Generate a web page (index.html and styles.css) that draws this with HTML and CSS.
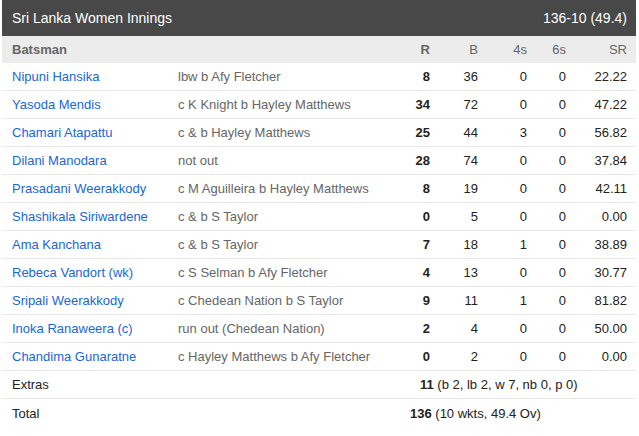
FILE: index.html
```html
<!DOCTYPE html>
<html>
<head>
<meta charset="utf-8">
<link rel="stylesheet" href="styles.css">
</head>
<body>
<div class="card">
  <div class="title">
    <span>Sri Lanka Women Innings</span>
    <span>136-10 (49.4)</span>
  </div>
  <div class="row head">
    <div class="c-name">Batsman</div>
    <div></div>
    <div class="num b">R</div>
    <div class="num">B</div>
    <div class="num">4s</div>
    <div class="num">6s</div>
    <div class="num">SR</div>
  </div>
  <div class="row"><a class="c-name">Nipuni Hansika</a><div class="out">lbw b Afy Fletcher</div><div class="num b">8</div><div class="num">36</div><div class="num">0</div><div class="num">0</div><div class="num">22.22</div></div>
  <div class="row"><a class="c-name">Yasoda Mendis</a><div class="out">c K Knight b Hayley Matthews</div><div class="num b">34</div><div class="num">72</div><div class="num">0</div><div class="num">0</div><div class="num">47.22</div></div>
  <div class="row"><a class="c-name">Chamari Atapattu</a><div class="out">c &amp; b Hayley Matthews</div><div class="num b">25</div><div class="num">44</div><div class="num">3</div><div class="num">0</div><div class="num">56.82</div></div>
  <div class="row"><a class="c-name">Dilani Manodara</a><div class="out">not out</div><div class="num b">28</div><div class="num">74</div><div class="num">0</div><div class="num">0</div><div class="num">37.84</div></div>
  <div class="row"><a class="c-name">Prasadani Weerakkody</a><div class="out">c M Aguilleira b Hayley Matthews</div><div class="num b">8</div><div class="num">19</div><div class="num">0</div><div class="num">0</div><div class="num">42.11</div></div>
  <div class="row"><a class="c-name">Shashikala Siriwardene</a><div class="out">c &amp; b S Taylor</div><div class="num b">0</div><div class="num">5</div><div class="num">0</div><div class="num">0</div><div class="num">0.00</div></div>
  <div class="row"><a class="c-name">Ama Kanchana</a><div class="out">c &amp; b S Taylor</div><div class="num b">7</div><div class="num">18</div><div class="num">1</div><div class="num">0</div><div class="num">38.89</div></div>
  <div class="row"><a class="c-name">Rebeca Vandort (wk)</a><div class="out">c S Selman b Afy Fletcher</div><div class="num b">4</div><div class="num">13</div><div class="num">0</div><div class="num">0</div><div class="num">30.77</div></div>
  <div class="row"><a class="c-name">Sripali Weerakkody</a><div class="out">c Chedean Nation b S Taylor</div><div class="num b">9</div><div class="num">11</div><div class="num">1</div><div class="num">0</div><div class="num">81.82</div></div>
  <div class="row"><a class="c-name">Inoka Ranaweera (c)</a><div class="out">run out (Chedean Nation)</div><div class="num b">2</div><div class="num">4</div><div class="num">0</div><div class="num">0</div><div class="num">50.00</div></div>
  <div class="row"><a class="c-name">Chandima Gunaratne</a><div class="out">c Hayley Matthews b Afy Fletcher</div><div class="num b">0</div><div class="num">2</div><div class="num">0</div><div class="num">0</div><div class="num">0.00</div></div>
  <div class="sum">
    <div class="lbl">Extras</div>
    <div class="val extras"><b>11</b> (b 2, lb 2, w 7, nb 0, p 0)</div>
  </div>
  <div class="sum last">
    <div class="lbl">Total</div>
    <div class="val total"><b>136</b> (10 wkts, 49.4 Ov)</div>
  </div>
</div>
</body>
</html>
```
FILE: styles.css
```css
* { box-sizing: border-box; }
body {
  margin: 0;
  background: #fff;
  font-family: Arial, "Liberation Sans", Helvetica, sans-serif;
  font-size: 13px;
  color: #222;
}
.card {
  margin: 0 3px 0 2px;
}
.title {
  height: 36px;
  background: #484848;
  color: #fff;
  font-size: 14px;
  display: flex;
  justify-content: space-between;
  align-items: center;
  padding: 0 9px 0 10px;
}
.row {
  display: grid;
  grid-template-columns: 166px 212px 40px 48px 49px 39px 61px;
  align-items: center;
  height: 28px;
  padding: 0 9px 0 10px;
  border-bottom: 1px solid #e8e8e8;
}
.row.head {
  height: 27px;
  background: #ececec;
  color: #666;
  border-bottom: none;
}
.row.head .c-name { font-weight: bold; }
.c-name {
  color: #1866db;
  text-decoration: none;
  white-space: nowrap;
}
.head .c-name { color: #666; }
.out {
  color: #666;
  white-space: nowrap;
}
.num {
  text-align: right;
}
.head .num { color: #666; }
.b { font-weight: bold; }
.head .b { color: #666; }
.sum {
  display: flex;
  align-items: center;
  height: 28px;
  padding: 0 9px 0 10px;
  border-bottom: 1px solid #e8e8e8;
}
.sum.last { border-bottom: none; }
.lbl { width: 398px; }
.val.extras { padding-left: 10px; }
```
